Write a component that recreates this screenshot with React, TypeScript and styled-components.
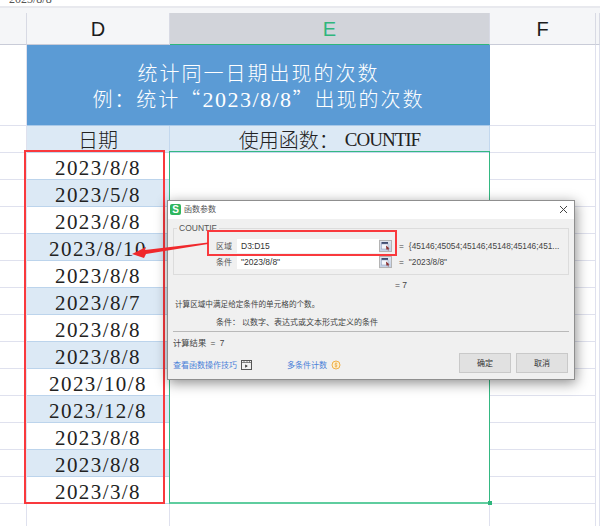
import React from 'react';
import styled, { createGlobalStyle } from 'styled-components';

const GlobalStyle = createGlobalStyle`
  html, body {
    margin: 0;
    padding: 0;
    background: #fff;
    overflow: hidden;
  }
  * {
    box-sizing: border-box;
  }
`;

const serif = `"Liberation Serif", "Noto Sans CJK SC", serif`;
const cjk = `"Noto Sans CJK SC", "Noto Sans", sans-serif`;
const latin = `"Liberation Sans", "Noto Sans CJK SC", sans-serif`;
const gridLine = '#dfe1ee';
const columns = '27px 143px 320px 106px 1fr';

const Page = styled('div')`
  position: relative;
  width: 600px;
  height: 526px;
  overflow: hidden;
  background: #fff;
  display: flex;
  flex-direction: column;
`;

const FormulaBar = styled('div')`
  flex: none;
  height: 6px;
  padding-left: 9px;
  overflow: hidden;
  font: 12px/6px ${serif};
  color: #555;
`;

const FormulaText = styled('div')`
  margin-top: -4px;
`;

const Gap = styled('div')`
  flex: none;
  height: 7px;
  border-top: 2px solid #e8e9ee;
  background: #f5f6f8;
`;

const HeaderRow = styled('div')`
  flex: none;
  display: grid;
  grid-template-columns: ${columns};
  height: 32px;
`;

const HeaderCell = styled('div')<{ $active?: boolean }>`
  display: flex;
  align-items: center;
  justify-content: center;
  padding-top: 1px;
  font: 20px/1 "Liberation Sans", sans-serif;
  color: ${(p) => (p.$active ? '#2fb67c' : '#1c1c1c')};
  background: ${(p) => (p.$active ? '#d2d4da' : '#f5f6f8')};
  border-right: 1px solid #d8dae4;
  border-bottom: 1px solid ${(p) => (p.$active ? '#2fb67c' : '#c9ccd8')};
`;

const Row = styled('div')<{ $height: number }>`
  flex: none;
  display: grid;
  grid-template-columns: ${columns};
  grid-template-rows: minmax(0, 1fr);
  height: ${(p) => p.$height}px;
`;

const Cell = styled('div')`
  border-right: 1px solid ${gridLine};
  border-bottom: 1px solid ${gridLine};
`;

const TitleCell = styled('div')`
  grid-column: 2 / 4;
  background: #5b9bd5;
  color: #fff;
  display: flex;
  flex-direction: column;
  align-items: center;
  justify-content: center;
  padding-top: 2px;
  font: 300 20px/26px ${cjk};
  letter-spacing: 2px;
  border-bottom: 1px solid #a9c9e8;
`;

const TitleLatin = styled('span')`
  font: 22px/26px ${serif};
  letter-spacing: 1.5px;
`;

const LabelCell = styled('div')`
  display: flex;
  align-items: center;
  justify-content: center;
  padding-top: 1px;
  background: #dce9f5;
  border-right: 1px solid #c3d8ee;
  border-bottom: 1px solid #c3d8ee;
  color: #222;
  font: 300 20px/1 ${cjk};
`;

const LabelLatin = styled('span')`
  font: 19px/1 ${serif};
  letter-spacing: -1px;
  margin-left: 6px;
`;

const DateCell = styled('div')<{ $band: boolean }>`
  display: flex;
  align-items: center;
  justify-content: center;
  padding-top: 5px;
  background: ${(p) => (p.$band ? '#dce9f5' : '#fff')};
  border-right: 1px solid #c3d8ee;
  border-bottom: 1px solid #bcd4ec;
  color: #222;
  font: 21px/1 ${serif};
  letter-spacing: 1.4px;
`;

const BlankCell = styled('div')`
  border-right: 1px solid ${gridLine};
`;

const RedBox = styled('div')`
  position: absolute;
  border: 2px solid #f9393d;
  pointer-events: none;
`;

const DatesMark = styled(RedBox)`
  left: 24px;
  top: 150px;
  width: 141px;
  height: 354px;
`;

const RangeMark = styled(RedBox)`
  left: 207px;
  top: 230px;
  width: 190px;
  height: 26px;
  z-index: 4;
`;

const Selection = styled('div')`
  position: absolute;
  left: 169px;
  top: 151px;
  width: 321px;
  height: 353px;
  border: 1px solid #35b882;
  border-bottom: 2px solid #5fcd9f;
`;

const FillHandle = styled('div')`
  position: absolute;
  right: -3px;
  bottom: -3px;
  width: 4px;
  height: 4px;
  background: #2fb67c;
`;

const Arrow = styled('svg')`
  position: absolute;
  left: 125px;
  top: 236px;
  z-index: 5;
`;

const Dialog = styled('div')`
  position: absolute;
  left: 167px;
  top: 200px;
  width: 408px;
  height: 180px;
  z-index: 3;
  background: #f0f0f0;
  border: 1px solid #8f8f8f;
  box-shadow: 1px 3px 12px rgba(0, 0, 0, 0.45);
  display: flex;
  flex-direction: column;
  color: #444;
  font: 8px/12px ${cjk};
`;

const DialogTitle = styled('div')`
  height: 18px;
  background: #fff;
  display: flex;
  align-items: center;
  padding: 0 5px 2px 2px;
  gap: 3px;
  font-size: 8px;
  color: #555;
`;

const Logo = styled('div')`
  width: 11px;
  height: 11px;
  border-radius: 2px;
  background: #2fb65e;
  color: #fff;
  font: bold 10px/11px "Liberation Sans", sans-serif;
  text-align: center;
`;

const CloseIcon = styled('svg')`
  margin-left: auto;
  margin-right: 1px;
`;

const DialogBody = styled('div')`
  flex: 1;
  display: flex;
  flex-direction: column;
  padding: 9px 5px 0 5px;
`;

const ArgsBox = styled('div')`
  position: relative;
  height: 47px;
  border: 1px solid #dcdcdc;
  padding: 10px 0 0 42px;
  display: flex;
  flex-direction: column;
  gap: 2px;
`;

const ArgsLegend = styled('div')`
  position: absolute;
  left: 3px;
  top: -6px;
  padding: 0 2px;
  background: #f0f0f0;
  font: 8.5px/11px "Liberation Sans", sans-serif;
  color: #555;
`;

const ArgRow = styled('div')`
  display: flex;
  align-items: center;
  height: 14px;
`;

const ArgLabel = styled('div')`
  width: 21px;
  font-size: 8px;
  color: #555;
`;

const ArgInput = styled('div')`
  width: 142px;
  height: 14px;
  background: #fff;
  padding-left: 4px;
  font: 8.5px/14px "Liberation Sans", sans-serif;
  color: #333;
`;

const PickButton = styled('div')`
  width: 13px;
  height: 12px;
  background: linear-gradient(#dfe4ee, #c3d0e6);
  border: 1px solid #b4b4b4;
  display: flex;
  align-items: center;
  justify-content: center;
`;

const ArgValue = styled('div')`
  margin-left: 7px;
  font: 8.3px/14px "Liberation Sans", sans-serif;
  color: #444;
  white-space: nowrap;
`;

const Equals = styled('span')`
  margin-right: 5px;
`;

const ResultLine = styled('div')`
  height: 20px;
  padding-left: 222px;
  font: 8.5px/20px "Liberation Sans", sans-serif;
`;

const Description = styled('div')`
  padding-left: 2px;
  font-size: 7.6px;
  height: 18px;
  line-height: 18px;
`;

const ConditionNote = styled('div')`
  padding-left: 43px;
  font-size: 8px;
  height: 17px;
  line-height: 17px;
  display: flex;
`;

const NoteLabel = styled('span')`
  width: 26px;
`;

const Divider = styled('div')`
  height: 1px;
  background: #b9b9b9;
  margin-top: 1px;
`;

const TotalLine = styled('div')`
  margin-top: 3px;
  height: 16px;
  font: 8.3px/16px ${latin};
  word-spacing: 2px;
`;

const Footer = styled('div')`
  display: flex;
  align-items: center;
  margin-top: 2px;
`;

const HelpLink = styled('span')`
  color: #4a7fd8;
  font-size: 8px;
`;

const HelpGroup = styled('div')<{ $width: number }>`
  width: ${(p) => p.$width}px;
  padding-top: 4px;
  display: flex;
  align-items: center;
  gap: 4px;
`;

const DialogButton = styled('div')`
  width: 52px;
  height: 20px;
  margin-right: 5px;
  background: #e1e1e1;
  border: 1px solid #c9c9c9;
  text-align: center;
  font-size: 8px;
  line-height: 18px;
  color: #333;

  &:last-child {
    margin-right: 0;
  }
`;

const dates = [
  '2023/8/8',
  '2023/5/8',
  '2023/8/8',
  '2023/8/10',
  '2023/8/8',
  '2023/8/7',
  '2023/8/8',
  '2023/8/8',
  '2023/10/8',
  '2023/12/8',
  '2023/8/8',
  '2023/8/8',
  '2023/3/8',
];

const PickIcon = () => (
  <PickButton>
    <svg width="10" height="10" viewBox="0 0 10 10">
      <rect x="0.5" y="1" width="6.5" height="2" fill="#3f4d70" />
      <rect x="0.5" y="3" width="6.5" height="5" fill="#f4f6fb" stroke="#8a98b8" strokeWidth="0.5" />
      <path d="M5 4.5l3.6 3-1.3.2.6 1.6-.9.3-.6-1.6-1 .8z" fill="#8a3030" />
    </svg>
  </PickButton>
);

export default function App() {
  return (
    <Page>
      <GlobalStyle />
      <FormulaBar>
        <FormulaText>2023/8/8</FormulaText>
      </FormulaBar>
      <Gap />
      <HeaderRow>
        <HeaderCell />
        <HeaderCell>D</HeaderCell>
        <HeaderCell $active>E</HeaderCell>
        <HeaderCell>F</HeaderCell>
        <HeaderCell />
      </HeaderRow>
      <Row $height={81}>
        <Cell />
        <TitleCell>
          <div>统计同一日期出现的次数</div>
          <div>
            {'例\uFF1A统计\u201C'}
            <TitleLatin>2023/8/8</TitleLatin>
            {'\u201D出现的次数'}
          </div>
        </TitleCell>
        <Cell />
        <BlankCell />
      </Row>
      <Row $height={27}>
        <Cell />
        <LabelCell>日期</LabelCell>
        <LabelCell>
          {'使用函数\uFF1A'}
          <LabelLatin>COUNTIF</LabelLatin>
        </LabelCell>
        <Cell />
        <BlankCell />
      </Row>
      {dates.map((d, i) => (
        <Row $height={27} key={i}>
          <Cell />
          <DateCell $band={i % 2 === 1}>{d}</DateCell>
          <BlankCell />
          <Cell />
          <BlankCell />
        </Row>
      ))}
      <Row $height={22}>
        <BlankCell />
        <BlankCell />
        <BlankCell />
        <BlankCell />
        <BlankCell />
      </Row>

      <Selection>
        <FillHandle />
      </Selection>
      <DatesMark />

      <Dialog>
        <DialogTitle>
          <Logo>S</Logo>
          函数参数
          <CloseIcon width="9" height="9" viewBox="0 0 9 9">
            <path d="M1 1l7 7M8 1l-7 7" stroke="#444" strokeWidth="1" fill="none" />
          </CloseIcon>
        </DialogTitle>
        <DialogBody>
          <ArgsBox>
            <ArgsLegend>COUNTIF</ArgsLegend>
            <ArgRow>
              <ArgLabel>区域</ArgLabel>
              <ArgInput>D3:D15</ArgInput>
              <PickIcon />
              <ArgValue>
                <Equals>=</Equals>
                {'{45146;45054;45146;45148;45146;451...'}
              </ArgValue>
            </ArgRow>
            <ArgRow>
              <ArgLabel>条件</ArgLabel>
              <ArgInput>"2023/8/8"</ArgInput>
              <PickIcon />
              <ArgValue>
                <Equals>=</Equals>
                "2023/8/8"
              </ArgValue>
            </ArgRow>
          </ArgsBox>
          <ResultLine>= 7</ResultLine>
          <Description>计算区域中满足给定条件的单元格的个数。</Description>
          <ConditionNote>
            <NoteLabel>{'条件\uFF1A'}</NoteLabel>
            以数字、表达式或文本形式定义的条件
          </ConditionNote>
          <Divider />
          <TotalLine>计算结果 = 7</TotalLine>
          <Footer>
            <HelpGroup $width={114}>
              <HelpLink>查看函数操作技巧</HelpLink>
              <svg width="11" height="10" viewBox="0 0 11 10">
                <rect x="0.5" y="0.5" width="10" height="9" fill="none" stroke="#555" />
                <path d="M0.5 2.5h10M3 0.5v2M6 0.5v2M8.5 0.5v2" stroke="#555" strokeWidth="0.7" />
                <path d="M4.2 4.5l2.6 1.6-2.6 1.6z" fill="#333" />
              </svg>
            </HelpGroup>
            <HelpGroup $width={172}>
              <HelpLink>多条件计数</HelpLink>
              <svg width="10" height="10" viewBox="0 0 10 10">
                <circle cx="5" cy="5" r="4" fill="#fdf0cf" stroke="#f0b04a" />
                <path d="M5 2.5v5M6.3 3.6c-1.5-.8-2.8 0-2.2 1 .5.8 2.4.6 2 1.6-.4.8-1.7.6-2.4 0" stroke="#eaa030" strokeWidth="0.6" fill="none" />
              </svg>
            </HelpGroup>
            <DialogButton>确定</DialogButton>
            <DialogButton>取消</DialogButton>
          </Footer>
        </DialogBody>
      </Dialog>

      <RangeMark />
      <Arrow width="85" height="24" viewBox="0 0 85 24">
        <path d="M7 18L21 11L20 14L83 6.5L83 8L21 18L19 22z" fill="#f0282c" />
      </Arrow>
    </Page>
  );
}
